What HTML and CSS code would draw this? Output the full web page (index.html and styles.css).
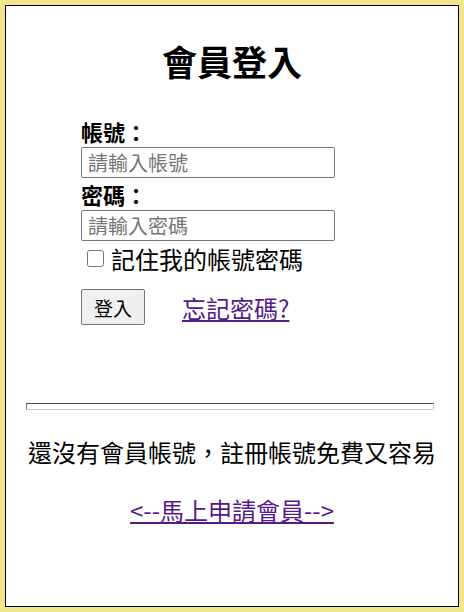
FILE: index.html
```html
<!DOCTYPE html>
<html>
<head>
    <meta charset="UTF-8">
    <title>會員登入</title>
    <link rel="stylesheet" href="styles.css">
</head>
<body>
    <div class="box">
        <h1>會員登入</h1>
        <form class="login">
            <label class="lbl">帳號：</label>
            <input type="text" class="txt" placeholder="請輸入帳號">
            <label class="lbl">密碼：</label>
            <input type="password" class="txt" placeholder="請輸入密碼">
            <label class="remember"><input type="checkbox" class="chk">記住我的帳號密碼</label>
            <div class="actions">
                <button type="button" class="btn">登入</button>
                <a href="#" class="forget">忘記密碼?</a>
            </div>
        </form>
        <hr class="line">
        <p class="hint">還沒有會員帳號，註冊帳號免費又容易</p>
        <p class="reg"><a href="#">&lt;--馬上申請會員--&gt;</a></p>
    </div>
</body>
</html>
```

FILE: styles.css
```css
html, body, h1, p, form{margin: 0;padding: 0;}
body{margin: 5px;background: #f0e68c;font-family: "Noto Sans CJK TC", "Noto Sans", sans-serif;color: #000;}
.box{height: 600px;border: 1px solid #000;background: #fff;}
h1{margin-top: 30px;height: 50px;line-height: 50px;text-align: center;font-size: 35px;font-weight: bold;}
.login{display: flex;flex-direction: column;align-items: flex-start;padding-left: 75px;margin-top: 30px;}
.lbl{font-size: 22px;font-weight: bold;line-height: 30px;height: 30px;}
.txt{width: 254px;height: 31px;box-sizing: border-box;border: 1px solid #767676;border-radius: 2px;padding: 0 6px;font-size: 20px;font-family: inherit;}
.txt::placeholder{color: #757575;}
.lbl + .txt{margin-top: 1px;}
.txt + .lbl{margin-top: 1px;}
.remember{display: flex;align-items: center;font-size: 24px;height: 30px;margin-top: 2px;}
.chk{width: 17px;height: 17px;margin: 0 7px 0 6px;}
.actions{display: flex;align-items: center;margin-top: 16px;}
.btn{width: 64px;height: 36px;font-size: 19px;font-family: inherit;background: #efefef;border: 1px solid #767676;border-radius: 2px;padding: 0;}
.forget{margin-left: 37px;font-size: 24px;color: #551a8b;}
.line{width: 406px;margin: 78px 0 0 20px;height: 5px;border: 1px inset #ccc;border-top-color: #999;}
.hint{margin-top: 27px;text-align: center;font-size: 24px;line-height: 30px;}
.reg{margin-top: 28px;text-align: center;font-size: 24px;line-height: 30px;}
.reg a{color: #551a8b;}
```
